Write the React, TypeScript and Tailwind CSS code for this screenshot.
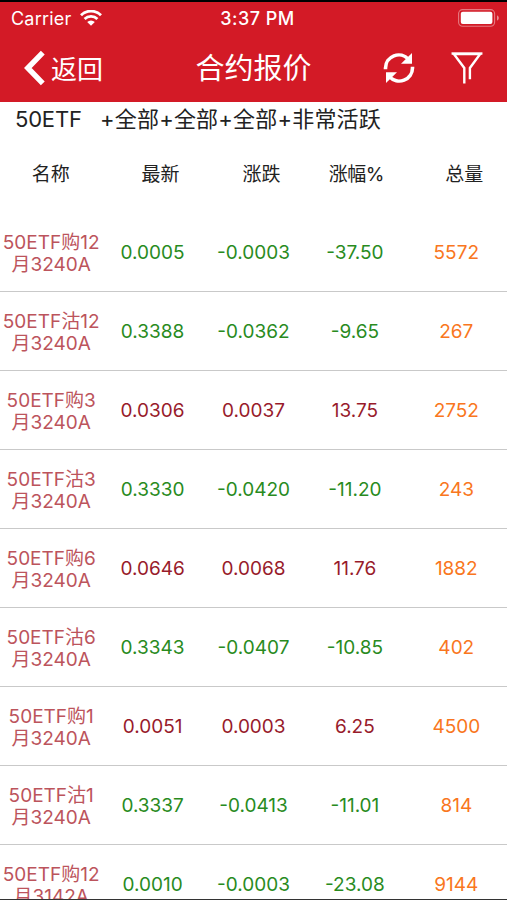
import React from "react";

type Tone = "up" | "down";

interface Quote {
  name: [string, string];
  last: string;
  change: string;
  percent: string;
  volume: string;
  tone: Tone;
}

const quotes: Quote[] = [
  { name: ["50ETF购12", "月3240A"], last: "0.0005", change: "-0.0003", percent: "-37.50", volume: "5572", tone: "down" },
  { name: ["50ETF沽12", "月3240A"], last: "0.3388", change: "-0.0362", percent: "-9.65", volume: "267", tone: "down" },
  { name: ["50ETF购3", "月3240A"], last: "0.0306", change: "0.0037", percent: "13.75", volume: "2752", tone: "up" },
  { name: ["50ETF沽3", "月3240A"], last: "0.3330", change: "-0.0420", percent: "-11.20", volume: "243", tone: "down" },
  { name: ["50ETF购6", "月3240A"], last: "0.0646", change: "0.0068", percent: "11.76", volume: "1882", tone: "up" },
  { name: ["50ETF沽6", "月3240A"], last: "0.3343", change: "-0.0407", percent: "-10.85", volume: "402", tone: "down" },
  { name: ["50ETF购1", "月3240A"], last: "0.0051", change: "0.0003", percent: "6.25", volume: "4500", tone: "up" },
  { name: ["50ETF沽1", "月3240A"], last: "0.3337", change: "-0.0413", percent: "-11.01", volume: "814", tone: "down" },
  { name: ["50ETF购12", "月3142A"], last: "0.0010", change: "-0.0003", percent: "-23.08", volume: "9144", tone: "down" },
];

function WifiIcon() {
  return (
    <svg className="ml-[9px] h-[16px] w-[22px]" viewBox="0 0 22 16" fill="none" stroke="#fff" strokeWidth="2.8">
      <path d="M1 5.2a14.2 14.2 0 0 1 20 0" />
      <path d="M4.6 9a9 9 0 0 1 12.8 0" />
      <path d="M7.2 12a5.4 5.4 0 0 1 7.6 0L11 15.8z" fill="#fff" stroke="none" />
    </svg>
  );
}

function BatteryIcon() {
  return (
    <svg className="h-[18px] w-[41px]" viewBox="0 0 41 18" fill="none">
      <rect x=".6" y=".6" width="36" height="16.6" rx="4" stroke="#fff" strokeOpacity=".42" strokeWidth="1.1" />
      <rect x="2.8" y="2.8" width="31.6" height="12.2" rx="2" fill="#fff" />
      <path d="M39 6.2q1.9 1 1.9 2.8T39 11.8z" fill="#fff" fillOpacity=".5" />
    </svg>
  );
}

function RefreshIcon() {
  return (
    <svg className="h-[32px] w-[32px]" viewBox="0 0 32 32" fill="none" stroke="#fff" strokeWidth="3.6">
      <path d="M2.5 17.2V16A13.2 13.2 0 0 1 25.4 7.2" />
      <path d="M29.5 14.8V16A13.2 13.2 0 0 1 6.6 24.8" />
      <path d="M29 1v10.8H18z" fill="#fff" stroke="none" />
      <path d="M3 31V20.2H14z" fill="#fff" stroke="none" />
    </svg>
  );
}

function FilterIcon() {
  return (
    <svg className="h-[32px] w-[32px]" viewBox="0 0 32 32" fill="none" stroke="#fff" strokeWidth="2.4">
      <path d="M13.3 31.5V16L2.8 2h26.4L18.9 16V27.2" />
      <path d="M.6 1.6h30.8" />
    </svg>
  );
}

export default function App() {
  return (
    <div className="flex h-[900px] w-[507px] flex-col overflow-hidden border-t-2 border-b border-t-black border-b-[#333] bg-white font-['Inter','Noto_Sans_CJK_SC',sans-serif]">
      <header className="h-[100px] shrink-0 bg-[#d31a26] text-white">
        <div className="grid h-[32px] grid-cols-[1fr_auto_1fr] items-center pr-[8px] pl-[11px]">
          <div className="flex items-center text-[18px] tracking-[0.2px]">
            Carrier
            <WifiIcon />
          </div>
          <div className="pl-[5px] text-[18px] font-medium tracking-[0.5px]">3:37 PM</div>
          <div className="flex justify-end">
            <BatteryIcon />
          </div>
        </div>
        <div className="grid h-[68px] grid-cols-[1fr_auto_1fr] items-center pr-[24px] pl-[24px]">
          <div className="flex items-center text-[26px]">
            <svg className="h-[36px] w-[22px]" viewBox="0 0 22 36" fill="none" stroke="#fff" strokeWidth="5.4">
              <path d="M18.8 2.6 3.8 18l15 15.4" />
            </svg>
            <span className="ml-[5px] pt-[3px]">返回</span>
          </div>
          <h1 className="pt-[2px] text-[29px] font-normal">合约报价</h1>
          <div className="flex items-center justify-end gap-[36px]">
            <RefreshIcon />
            <FilterIcon />
          </div>
        </div>
      </header>

      <div className="flex h-[34px] shrink-0 items-center pl-[15px] text-[22px] whitespace-pre text-[#222]">
        <span className="w-[85px] tracking-[-0.2px]">50ETF</span>
        <span className="tracking-[0.2px]">+全部+全部+全部+非常活跃</span>
      </div>
      <div className="grid h-[77px] shrink-0 grid-cols-5 items-center pt-px text-center text-[19px] text-[#222]">
        <span>名称</span>
        <span className="pl-[17px]">最新</span>
        <span className="pl-[16px]">涨跌</span>
        <span className="pl-[3px] tracking-[-0.5px]">涨幅%</span>
        <span className="pl-[16px]">总量</span>
      </div>

      <main className="min-h-0 flex-1 overflow-hidden">
        {quotes.map((q, i) => {
          const color = q.tone === "up" ? "text-[#981b2b]" : "text-[#298b1e]";
          return (
            <div
              key={i}
              className="grid h-[79px] grid-cols-5 items-center border-b border-[#c9c9c9] pt-[2px] text-center text-[19px]"
            >
              <div className="pt-[2px] pl-px leading-[22px] whitespace-nowrap text-[#bc545c]">
                <div>{q.name[0]}</div>
                <div>{q.name[1]}</div>
              </div>
              <span className={`pl-px ${color}`}>{q.last}</span>
              <span className={color}>{q.change}</span>
              <span className={color}>{q.percent}</span>
              <span className="text-[#f97620]">{q.volume}</span>
            </div>
          );
        })}
      </main>
    </div>
  );
}
